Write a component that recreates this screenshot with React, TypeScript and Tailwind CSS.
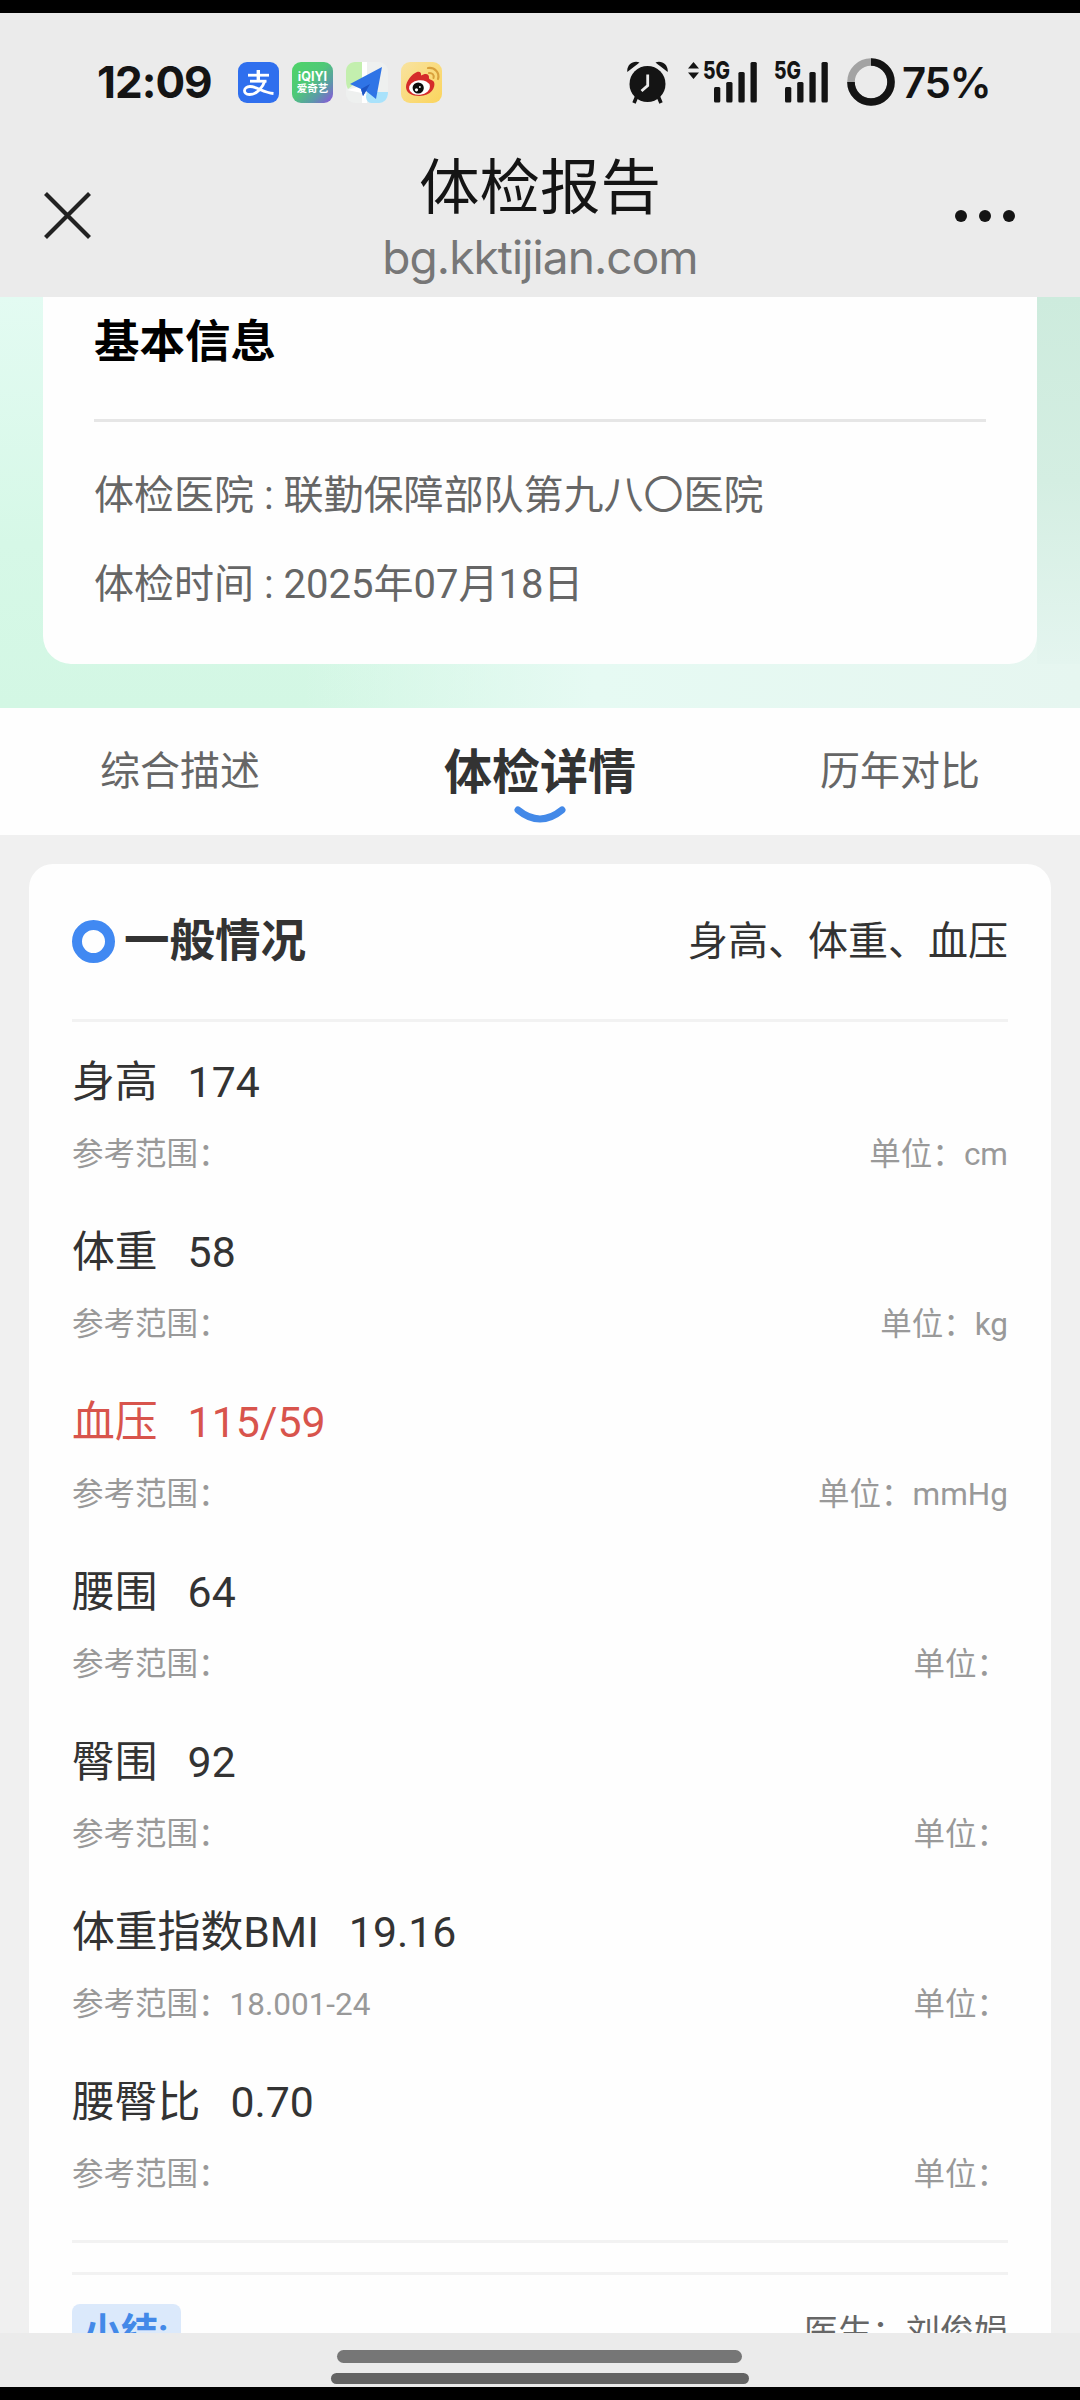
type Item = {
  name: string;
  value: string;
  range?: string;
  unit?: string;
  abnormal?: boolean;
};

const items: Item[] = [
  { name: '身高', value: '174', unit: 'cm' },
  { name: '体重', value: '58', unit: 'kg' },
  { name: '血压', value: '115/59', unit: 'mmHg', abnormal: true },
  { name: '腰围', value: '64' },
  { name: '臀围', value: '92' },
  { name: '体重指数BMI', value: '19.16', range: '18.001-24' },
  { name: '腰臀比', value: '0.70' },
];

function AlipayIcon() {
  return (
    <svg className="size-[41px]" viewBox="0 0 41 41" fill="none">
      <rect width="41" height="41" rx="9" fill="#2f6fee" />
      <g stroke="#fff" strokeWidth="2.8" strokeLinecap="butt">
        <path d="M10 13.2H31" />
        <path d="M20.3 8V19" strokeWidth="3.4" />
        <path d="M12 19.2H28.5" />
        <path d="M27 18.5C25 25 19 32.5 11.500 32.500C4.500 32.500 5 24.500 12 24.500C19 24.500 25 30.500 35.500 31.500" />
      </g>
    </svg>
  );
}

function IqiyiIcon() {
  return (
    <div className="flex size-[41px] flex-col items-center justify-center rounded-[9px] bg-[linear-gradient(135deg,#4fd468_0%,#4fc878_45%,#5b9aa8_72%,#8f4fe0_100%)] text-white">
      <span className="font-['Inter'] text-[12.5px] leading-[13px] font-bold">iQIYI</span>
      <span className="text-[10.5px] leading-[12px] font-bold">爱奇艺</span>
    </div>
  );
}

function PlaneIcon() {
  return (
    <svg className="h-[41px] w-[42px]" viewBox="0 0 42 41">
      <rect width="42" height="41" rx="9" fill="#eef0ef" />
      <path d="M9 0H16V16L2 27C0 24 0 20 0 16V9C0 4 4 0 9 0Z" fill="#c3efae" />
      <path d="M16 0H21V14L16 18Z" fill="#fff" />
      <path d="M1 28L16 24V41H21V32" fill="#fff" />
      <path d="M21 30H42C42 37 38 41 33 41H25C22 41 20 38 20 34Z" fill="#a9e2fb" />
      <path d="M36 5L4 22L15 27L17 34L20 29L30 37Z" fill="#2f74e6" />
      <path d="M15 27L17 34L20 29L24 22Z" fill="#1d55c4" />
    </svg>
  );
}

function WeiboIcon() {
  return (
    <svg className="size-[41px]" viewBox="0 0 41 41" fill="none">
      <defs>
        <linearGradient id="weibo-bg" x1="0" y1="0" x2="1" y2="1">
          <stop offset="0" stopColor="#f8e3a0" />
          <stop offset="1" stopColor="#fbd45c" />
        </linearGradient>
      </defs>
      <rect width="41" height="41" rx="9" fill="url(#weibo-bg)" />
      <path d="M5 25C5 19 11 12 16 10C19 9 20.500 11 20 13.500C23.500 11.500 28.500 10.800 28 16C27.800 18 31 17 33 20C35 25 30 34 18.500 34C11 34 5 31 5 25Z" fill="#d52b2a" />
      <ellipse cx="18.500" cy="25.500" rx="10.500" ry="7.200" fill="#fff" transform="rotate(-7 18.500 25.500)" />
      <circle cx="17.200" cy="26" r="5.600" fill="#0c0c0c" />
      <circle cx="15.500" cy="27.800" r="1.600" fill="#fff" />
      <circle cx="18.900" cy="25" r="0.900" fill="#fff" />
      <path d="M27 6C33.500 5 39 10.500 37 17" stroke="#d9a13c" strokeWidth="2.200" strokeLinecap="round" />
      <path d="M28 11C31 10.500 33.500 13 32.500 16" stroke="#d9a13c" strokeWidth="2" strokeLinecap="round" />
    </svg>
  );
}

function AlarmIcon() {
  return (
    <svg className="h-[43px] w-[41px]" viewBox="0 0 41 43" fill="none">
      <circle cx="20.500" cy="23" r="18" fill="#141414" />
      <path d="M0.300 11C-0.500 4 6 -1 12.500 1.500Q8 5 0.300 11Z" fill="#141414" />
      <path d="M40.700 11C41.500 4 35 -1 28.500 1.500Q33 5 40.700 11Z" fill="#141414" />
      <path d="M9.500 36L7 42M31.500 36L34 42" stroke="#141414" strokeWidth="3.600" />
      <path d="M20.700 13.500V24.500L14.500 30" stroke="#ebebeb" strokeWidth="2.800" />
    </svg>
  );
}

function Signal({ arrows }: { arrows?: boolean }) {
  return (
    <div className="flex h-[44px] items-start">
      {arrows && (
        <svg className="mt-[2px] mr-[4px] h-[17px] w-[11px]" viewBox="0 0 11 17" fill="#141414">
          <path d="M5.500 0L11 6.500H0ZM0 10.500H11L5.500 17Z" />
        </svg>
      )}
      <span className="relative block h-[44px] w-[54px]">
        <span className="absolute top-px left-0 origin-left scale-x-[0.8] font-['Inter'] text-[24px] leading-[20px] font-extrabold text-[#141414]">
          5G
        </span>
        <svg className="block h-[44px] w-[54px]" viewBox="0 0 54 44" fill="#141414">
          <rect x="11" y="27" width="6.300" height="15.500" rx="1.500" />
          <rect x="23.200" y="22" width="6.300" height="20.500" rx="1.500" />
          <rect x="35.400" y="12" width="6.300" height="30.500" rx="1.500" />
          <rect x="47.500" y="2" width="6.300" height="40.500" rx="1.500" />
        </svg>
      </span>
    </div>
  );
}

function BatteryRing() {
  return (
    <svg className="size-[48px]" viewBox="0 0 48 48" fill="none" strokeWidth="7.600">
      <circle cx="24" cy="24" r="20" stroke="#a3a3a3" />
      <path d="M24 4A20 20 0 1 1 4 24" stroke="#141414" />
    </svg>
  );
}

function StatusBar() {
  return (
    <div className="flex h-[138px] items-center justify-between pr-[91px] pl-[97px]">
      <div className="flex items-center">
        <span className="w-[141px] font-['Inter'] text-[44px] leading-[44px] font-bold tracking-[-1px] text-[#141414]">
          12:09
        </span>
        <div className="flex items-center gap-[13px]">
          <AlipayIcon />
          <IqiyiIcon />
          <PlaneIcon />
          <WeiboIcon />
        </div>
      </div>
      <div className="flex items-center">
        <AlarmIcon />
        <div className="ml-[20px]">
          <Signal arrows />
        </div>
        <div className="ml-[17px]">
          <Signal />
        </div>
        <div className="ml-[19px]">
          <BatteryRing />
        </div>
        <span className="mt-[2px] ml-[7px] w-[87px] font-['Inter'] text-[42px] leading-[44px] font-semibold tracking-[-1.3px] whitespace-nowrap text-[#141414]">
          75%
        </span>
      </div>
    </div>
  );
}

function TitleBar() {
  return (
    <div className="flex h-[146px] items-center justify-between">
      <div className="mb-[17px] flex w-[125px] pl-[44px]">
        <svg className="size-[47px]" viewBox="0 0 47 47" stroke="#222" strokeWidth="4.200">
          <path d="M1.500 1.500L45.500 45.500M45.500 1.500L1.500 45.500" />
        </svg>
      </div>
      <div className="mb-[9px] flex flex-col items-center">
        <h1 className="h-[74px] text-[60.5px] leading-[70px] text-[#141414]">体检报告</h1>
        <p className="font-['Inter'] text-[46px] leading-[58px] tracking-[-0.9px] text-[#777]">bg.kktijian.com</p>
      </div>
      <div className="mb-[17px] flex w-[125px]">
        <svg className="h-3 w-[60px]" viewBox="0 0 60 12" fill="#141414">
          <circle cx="6" cy="6" r="6" />
          <circle cx="30" cy="6" r="6" />
          <circle cx="54" cy="6" r="6" />
        </svg>
      </div>
    </div>
  );
}

function BasicInfo() {
  return (
    <section className="h-[411px] bg-[linear-gradient(to_bottom,#e3fbf2,#d6f8e7_60%,#d3f7e4)]">
      <div className="h-full bg-[linear-gradient(to_right,transparent_28%,#e6faf3_55%,#e6f6f0_100%)]">
        <div className="flex h-full">
          <div className="w-[43px]" />
          <div className="h-[367px] w-[994px] rounded-b-[28px] bg-[#fefefe] px-[51px]">
            <h2 className="flex h-[122px] items-center pb-[31px] text-[45.5px] leading-[60px] font-bold text-black">基本信息</h2>
            <div className="h-[3px] bg-[#e6e6e6]" />
            <div className="pt-[29px] text-[40px] leading-[89px] text-[#666]">
              <p>体检医院 : 联勤保障部队第九八〇医院</p>
              <p>体检时间 : 2025年07月18日</p>
            </div>
          </div>
          <div className="h-[367px] w-[43px] bg-[linear-gradient(to_bottom,#cdebdd,#d4eee2_50%,#e4f5ef)]" />
        </div>
      </div>
    </section>
  );
}

function Tabs() {
  return (
    <nav className="grid h-[127px] grid-cols-3 items-center text-center text-[40px] text-[#666]">
      <span className="leading-[60px]">综合描述</span>
      <span className="relative top-px text-[48px] leading-[60px] font-bold text-[#333]">
        体检详情
        <svg className="absolute top-[63px] left-[154px] h-[17px] w-[52px]" viewBox="0 0 52 17" fill="none">
          <path d="M4 4Q26 22 48 4" stroke="#4389e8" strokeWidth="7" strokeLinecap="round" />
        </svg>
      </span>
      <span className="leading-[60px]">历年对比</span>
    </nav>
  );
}

function Divider() {
  return <div className="h-[3px] bg-[#f2f2f2]" />;
}

function ResultRow({ item }: { item: Item }) {
  return (
    <li className="h-[170px] pt-[30px]">
      <div className={item.abnormal ? 'flex h-[60px] items-center text-[42.8px] text-[#d8544c]' : 'flex h-[60px] items-center text-[42.8px] text-[#333]'}>
        <span>{item.name}</span>
        <span className="ml-[30px]">{item.value}</span>
      </div>
      <div className="mt-[19px] flex h-[48px] items-center justify-between text-[31.5px] text-[#999]">
        <span>参考范围：{item.range}</span>
        <span>单位：{item.unit}</span>
      </div>
    </li>
  );
}

function GeneralCard() {
  return (
    <section className="mx-[29px] h-[1469px] overflow-hidden rounded-t-[24px] bg-[#fefefe] px-[43px]">
      <header className="flex h-[155px] items-center justify-between">
        <h2 className="flex items-center text-[45.5px] leading-[60px] font-bold text-[#333]">
          <span className="mr-[9px] size-[43px] rounded-full border-[10px] border-[#4189f2]" />
          <span className="pt-px">一般情况</span>
        </h2>
        <span className="text-[40px] leading-[60px] text-[#333]">身高、体重、血压</span>
      </header>
      <Divider />
      <ul className="h-[1218px]">
        {items.map((item) => (
          <ResultRow key={item.name} item={item} />
        ))}
      </ul>
      <Divider />
      <div className="h-[29px]" />
      <Divider />
      <footer className="flex items-start justify-between pt-[29px]">
        <span className="h-[60px] w-[109px] rounded-lg bg-[#dbe9fb] pl-[12px] text-[37px] leading-[58px] font-bold whitespace-nowrap text-[#4389e8]">
          小结:
        </span>
        <span className="text-[34px] leading-[56px] text-[#666]">医生：刘俊娟</span>
      </footer>
    </section>
  );
}

export default function App() {
  return (
    <div className="flex h-[2400px] w-[1080px] flex-col overflow-hidden bg-[#f0f0f0] font-['Roboto','Noto_Sans_CJK_SC',sans-serif]" lang="zh-CN">
      <div className="h-[13px] bg-black" />
      <header className="h-[284px] bg-[#ebebeb]">
        <StatusBar />
        <TitleBar />
      </header>
      <main className="h-[2036px] overflow-hidden">
        <BasicInfo />
        <div className="bg-[#fefefe]">
          <Tabs />
        </div>
        <div className="pt-[29px]">
          <GeneralCard />
        </div>
      </main>
      <div className="flex h-[54px] flex-col bg-[#ebebeb] pt-[17px]">
        <div className="ml-[337px] h-[13px] w-[405px] rounded-full bg-[#767676]" />
        <div className="mt-[10px] ml-[331px] h-[11px] w-[418px] rounded-full bg-[#636363]" />
      </div>
      <div className="h-[13px] bg-black" />
    </div>
  );
}
